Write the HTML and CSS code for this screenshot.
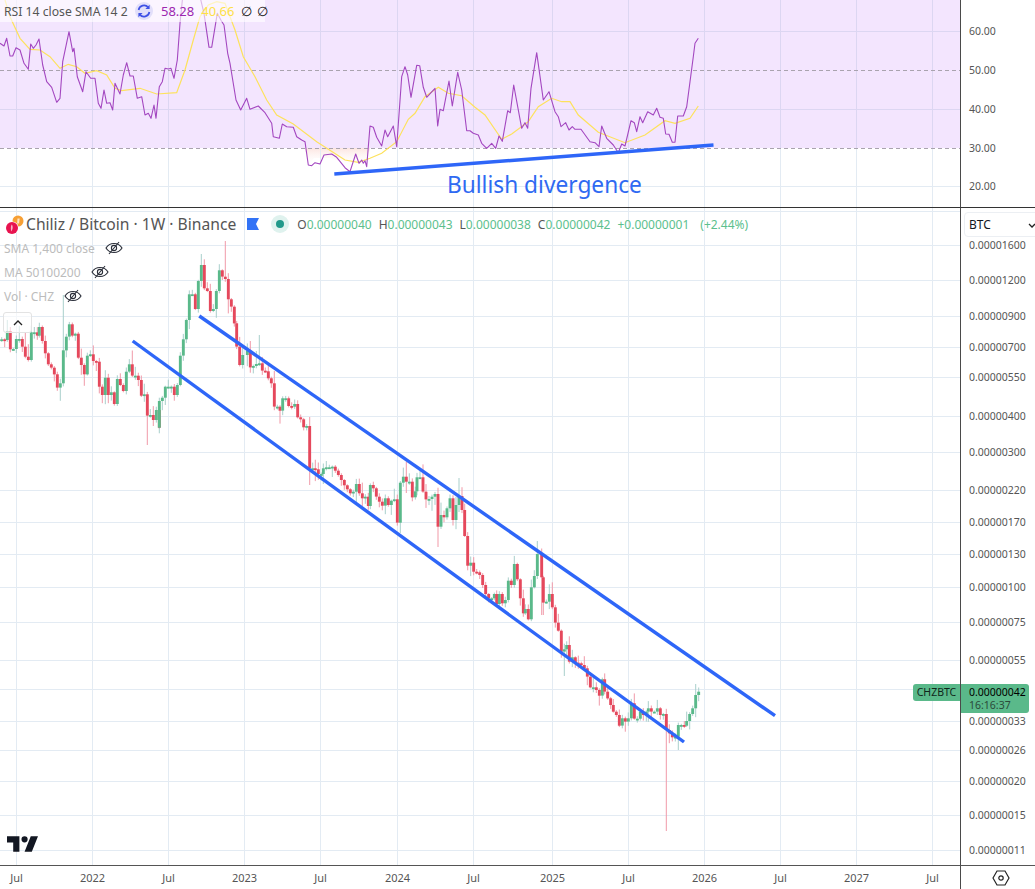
FILE: index.html
```html
<!DOCTYPE html>
<html lang="en">
<head>
<meta charset="utf-8">
<title>CHZBTC chart</title>
<link rel="stylesheet" href="styles.css">
</head>
<body>
<main class="chart">
  <section class="pane rsi-pane">
    <svg id="rsi" class="plot" width="960" height="207" viewBox="0 0 960 207"></svg>
    <div class="legend-rsi">
      <span class="rsi-name">RSI 14 close SMA 14 2</span>
      <svg class="reset" width="20" height="20" viewBox="0 0 20 20">
        <circle cx="10" cy="10" r="9" fill="#e2dffa"/>
        <path d="M4.6 9a5.5 5.5 0 0 1 9.6-2.6M15.4 11a5.5 5.5 0 0 1-9.6 2.6" fill="none" stroke="#3f51e6" stroke-width="1.7"/>
        <path d="M15.6 3.8v4.2h-4.2zM4.400 16.2v-4.2h4.2z" fill="#3f51e6"/>
      </svg>
      <span class="v-rsi">58.28</span>
      <span class="v-sma">40.66</span>
      <span class="v-na">∅</span>
      <span class="v-na">∅</span>
    </div>
    <div class="annotation">Bullish divergence</div>
  </section>
  <section class="axis rsi-axis"><svg id="rsiAxis" width="74" height="207" viewBox="961 0 74 207"></svg></section>

  <section class="pane price-pane">
    <svg id="price" class="plot" width="960" height="657" viewBox="0 208 960 657"></svg>
    <div class="legend-main">
      <div class="title-row">
        <svg class="logo" width="24" height="20" viewBox="0 0 24 20">
          <circle cx="16" cy="6" r="5.5" fill="#f7a035"/>
          <path d="M15.5 3.500h2.200l-.6 5h-2z" fill="#fff" opacity=".7"/>
          <circle cx="10" cy="13" r="6.600" fill="#fff"/>
          <circle cx="10" cy="13" r="6" fill="#e8134f"/>
          <path d="M9.600 9.500c1.600 1 1.600 5-.6 7 .2-2-.8-4 .6-7z" fill="#f6b3c6"/>
        </svg>
        <span class="title">Chiliz / Bitcoin · 1W · Binance</span>
        <svg class="flag" width="12" height="12" viewBox="0 0 12 12"><path d="M0 0h12L9 6l3 6H0z" fill="#3273f6"/></svg>
        <svg class="status" width="20" height="20" viewBox="0 0 20 20"><circle cx="10" cy="10" r="9" fill="#dff2ee"/><circle cx="10" cy="10" r="4" fill="#22998a"/></svg>
        <div class="ohlc">
          <span><b>O</b>0.00000040</span>
          <span><b>H</b>0.00000043</span>
          <span><b>L</b>0.00000038</span>
          <span><b>C</b>0.00000042</span>
          <span>+0.00000001</span>
          <span class="pct">(+2.44%)</span>
        </div>
      </div>
      <div class="ind-row"><span>SMA 1,400 close</span><svg class="eye" width="18" height="14" viewBox="0 0 18 14"><use href="#eyeoff"/></svg></div>
      <div class="ind-row"><span>MA 50100200</span><svg class="eye" width="18" height="14" viewBox="0 0 18 14"><use href="#eyeoff"/></svg></div>
      <div class="ind-row"><span>Vol · CHZ</span><svg class="eye" width="18" height="14" viewBox="0 0 18 14"><use href="#eyeoff"/></svg></div>
      <div class="collapse"><svg width="10" height="6" viewBox="0 0 10 6"><path d="M1 5l4-4 4 4" fill="none" stroke="#222" stroke-width="1.3"/></svg></div>
    </div>
    <svg class="tv-logo" width="31" height="16" viewBox="2 6 30 15"><path d="M14 6H2v6h6v9h6V6Zm12 15h-7l6-15h7l-6 15Zm-7-9a3 3 0 1 0 0-6 3 3 0 0 0 0 6Z" fill="#131722"/></svg>
    <div class="tag-left">CHZBTC</div>
  </section>
  <section class="axis price-axis">
    <div class="unit"><span>BTC</span><svg width="8" height="5" viewBox="0 0 8 5"><path d="M1 1l3 3 3-3" fill="none" stroke="#222" stroke-width="1.3"/></svg></div>
    <svg id="priceAxis" class="axis-svg" width="74" height="657" viewBox="961 208 74 657"></svg>
    <div class="tag-right"><strong>0.00000042</strong><span>16:16:37</span></div>
  </section>

  <section class="time-axis"><svg id="timeAxis" width="960" height="23" viewBox="0 866 960 23"></svg></section>
  <section class="corner">
    <svg width="18" height="16" viewBox="0 0 18 16"><path d="M1 8l4-7h8l4 7-4 7H5z" fill="none" stroke="#222" stroke-width="1.2"/><circle cx="9" cy="8" r="2.200" fill="none" stroke="#222" stroke-width="1.2"/></svg>
  </section>
</main>
<svg class="defs" width="0" height="0"><defs>
  <g id="eyeoff" fill="none" stroke="#2a2e39" stroke-width="1.1">
    <path d="M1 7c3.500-6 12.500-6 16 0-3.500 6-12.500 6-16 0z"/>
    <circle cx="9" cy="7" r="2.600"/>
    <path d="M4 13L14 1"/>
  </g>
</defs></svg>
<script src="chart.js"></script>
</body>
</html>
```
FILE: styles.css
```css
* { box-sizing: border-box; }
html, body { margin: 0; padding: 0; background: #fff; }
body { width: 1035px; height: 889px; overflow: hidden; font-family: "Noto Sans", "Open Sans", sans-serif; color: #555; }
.chart { display: grid; grid-template-columns: 961px 74px; grid-template-rows: 208px 658px 23px; width: 1035px; height: 889px; }
.pane { position: relative; overflow: hidden; border-right: 1px solid #4a4a4a; border-bottom: 1px solid #333; }
.price-pane { border-bottom-color: #555; }
.axis { position: relative; border-bottom: 1px solid #333; }
.price-axis { border-bottom-color: #555; }
.plot, .axis svg, .time-axis svg { display: block; }
.legend-rsi { position: absolute; left: 0; top: 0; width: 265px; height: 22px; padding-left: 4px; display: flex; align-items: center; background: rgba(255,255,255,.62); font-size: 13px; color: #555; white-space: nowrap; }
.rsi-name { flex: none; width: 130px; font-size: 12.200px; }
.reset { flex: none; }
.v-rsi { margin-left: 7px; color: #9c27b0; }
.v-sma { margin-left: 7px; color: #fde047; }
.v-na { margin-left: 7px; color: #111; }
.v-na + .v-na { margin-left: 5px; }
.annotation { position: absolute; left: 447px; top: 170px; font-size: 22.700px; line-height: 30px; color: #2f6af2; white-space: nowrap; }
.legend-main { position: absolute; left: 0; top: 0; }
.title-row { display: flex; align-items: center; height: 32px; margin-bottom: -4px; white-space: nowrap; }
.logo { margin-left: 2px; flex: none; position: relative; top: 1px; }
.title { font-size: 15.650px; color: #555; }
.flag { margin-left: 11px; flex: none; }
.status { margin-left: 11px; flex: none; }
.ohlc { display: flex; gap: 7px; margin-left: 7px; font-size: 12px; color: #5cbf8e; }
.ohlc b { font-weight: 400; color: #555; }
.pct { margin-left: 4px; }
.ind-row { display: flex; align-items: center; gap: 10px; height: 24px; padding-left: 4px; font-size: 12px; color: #bcbcbc; }
.ind-row svg { flex: none; }
.collapse { display: flex; align-items: center; justify-content: center; margin: 4px 0 0 3px; width: 29px; height: 21px; border: 1px solid #e3e3e3; border-radius: 3px; background: rgba(255,255,255,.6); }
.tv-logo { position: absolute; left: 7px; top: 628px; }
.tag-left { position: absolute; left: 913px; top: 476px; width: 47px; height: 17px; background: #5ab98a; border-radius: 3px 0 0 3px; font-size: 10.500px; line-height: 17px; text-align: center; color: #10261b; }
.unit { position: absolute; left: 3px; top: 4px; width: 75px; height: 25px; border: 1px solid #eceff3; border-radius: 4px; padding: 0 4px; display: flex; align-items: center; font-size: 12px; color: #131722; z-index: 2; background: #fff; }
.unit svg { position: absolute; left: 63px; top: 10px; }
.tag-right { position: absolute; left: 0; top: 476px; width: 68px; height: 29px; padding-left: 8px; background: #5ab98a; border-radius: 0 3px 3px 0; font-size: 10.500px; line-height: 13px; padding-top: 2px; color: #10261b; }
.tag-right strong { display: block; font-weight: 400; color: #000; }
.tag-right span { display: block; color: #2b4a3a; }
.time-axis { border-right: 1px solid #4a4a4a; }
.corner { display: flex; align-items: center; justify-content: center; padding-left: 6px; }
.defs { position: absolute; }
.ax { font-size: 10.500px; fill: #555; }
.tx { font-size: 11px; fill: #555; text-anchor: middle; }
```
FILE: chart.js
```js
(function () {
  var NS = 'http://www.w3.org/2000/svg';
  function el(parent, name, attrs, text) {
    var e = document.createElementNS(NS, name);
    for (var k in attrs) e.setAttribute(k, attrs[k]);
    if (text) e.textContent = text;
    parent.appendChild(e);
    return e;
  }
  function parse(s, ox, oy) {
    return s.trim().split(/\s+/).map(function (p) {
      var a = p.split(',');
      return [ox + a[0] / 3, oy + a[1] / 3];
    });
  }
  function pts(a) { return a.map(function (p) { return p[0].toFixed(1) + ',' + p[1].toFixed(1); }).join(' '); }

  var VX = [16, 92, 168, 244, 320, 397, 473, 552, 628, 704, 780, 856, 932];
  var VL = ['Jul', '2022', 'Jul', '2023', 'Jul', '2024', 'Jul', '2025', 'Jul', '2026', 'Jul', '2027', 'Jul'];

  /* ---------- RSI pane ---------- */
  var r = document.getElementById('rsi');
  var defs = el(r, 'defs', {});
  var grad = el(defs, 'linearGradient', { id: 'under', x1: 0, y1: 0, x2: 0, y2: 1 });
  el(grad, 'stop', { offset: 0, 'stop-color': '#fbdcd6', 'stop-opacity': .75 });
  el(grad, 'stop', { offset: 1, 'stop-color': '#fff', 'stop-opacity': 0 });
  el(r, 'rect', { x: 0, y: 0, width: 960, height: 148, fill: '#f3e5fe' });
  el(r, 'path', { d: 'M305 148H370L366 165H350L330 158H314L308 166Z', fill: 'url(#under)' });
  [[31, '#dcd6f2'], [109, '#dcd6f2'], [186, '#e3ebf3']].forEach(function (h) {
    el(r, 'rect', { x: 0, y: h[0], width: 960, height: 1, fill: h[1] });
  });
  VX.forEach(function (x) {
    el(r, 'rect', { x: x, y: 0, width: 1, height: 148, fill: '#dcd6f2' });
    el(r, 'rect', { x: x, y: 148, width: 1, height: 59, fill: '#e3ebf3' });
  });
  [70.5, 148.5].forEach(function (y) {
    el(r, 'line', { x1: 0, x2: 960, y1: y, y2: y, stroke: '#a9a3ae', 'stroke-dasharray': '4 3' });
  });

  var rsi = parse('0,130 12,138 20,115 30,168 38,168 48,143 60,150 72,190 85,208 92,132 100,145 108,135 117,117 128,195 140,245 155,262 170,307 180,295 188,185 207,95 218,155 222,145 232,230 248,275 258,215 272,235 285,235 295,310 303,325 312,270 320,310 330,308 338,330 345,250 360,282 370,225 380,188 390,228 400,228 412,295 425,290 435,345 445,340 453,355 462,315 468,355 478,260 487,245 495,205 505,207 513,205 522,235 532,180 540,70 548,-10 600,-10 612,40 627,142 635,142 652,40 664,62 672,75 683,160 690,190 708,300 722,330 740,295 750,328 775,318 795,338 815,370 820,410 838,415 847,372 860,380 880,382 890,410 905,420 915,425 925,495 935,497 945,488 960,492 972,465 995,462 1010,472 1035,503', 0, 0)
    .concat(parse('15,515 32,462 42,490 50,480 55,490 60,482 65,500 75,378 85,382 95,412 110,438 120,390 128,410 145,378 155,440 170,230 180,200 188,225 198,292 215,196 224,197 235,262 245,292 270,265 278,378 285,328 295,332 312,243 322,318 338,217 350,270 365,392 375,392 385,400 400,405 410,430 425,445 440,430 452,445 462,408 472,424 488,332 496,338 506,255 530,385 540,368 548,385 558,265 575,158 595,300 612,275 630,335 640,350 648,380 662,368 672,390 682,380 690,388 708,388 735,425 750,428 762,440 770,378 785,415 805,435 820,458 830,432 840,438 858,362 868,368 875,395 885,350 893,368 908,335 925,345 935,325 945,352 955,355 962,402 972,403 982,427 990,427 998,348 1015,348 1025,320 1035,245', 345, 0))
    .concat(parse('10,170 15,130 25,115', 690, 0));
  var sma = parse('15,0 30,50 60,115 90,148 120,150 150,170 180,205 205,193 230,200 255,220 290,212 320,225 345,265 365,272 420,265 470,282 530,278 555,210 580,120 600,50 625,15 650,5 675,10 705,90 730,170 765,230 800,300 830,345 880,372 950,425 1035,480', 0, 0)
    .concat(parse('40,487 75,475 110,460 155,425 190,358 210,340 240,290 280,262 310,280 350,287 390,322 420,345 470,418 500,402 550,365 580,320 620,295 650,305 675,305 700,345 760,397 840,428 900,405 960,362 990,370 1035,355', 345, 0))
    .concat(parse('25,318', 690, 0));
  el(r, 'polyline', { points: pts(sma), fill: 'none', stroke: '#fde25c', 'stroke-width': 1.2 });
  el(r, 'polyline', { points: pts(rsi), fill: 'none', stroke: '#a347c0', 'stroke-width': 1.1, 'stroke-linejoin': 'round' });
  el(r, 'line', { x1: 334.3, y1: 174, x2: 713.5, y2: 145, stroke: '#2e66f8', 'stroke-width': 3.4 });

  var ra = document.getElementById('rsiAxis');
  [[60, 35], [50, 74], [40, 113], [30, 152], [20, 190]].forEach(function (a) {
    el(ra, 'text', { x: 969, y: a[1], class: 'ax' }, a[0].toFixed(2));
  });

  /* ---------- Price pane ---------- */
  var p = document.getElementById('price');
  var H = [[211], [245, '1600'], [280, '1200'], [316, '0900'], [347, '0700'], [377, '0550'], [416, '0400'], [452, '0300'], [490, '0220'], [522, '0170'], [554, '0130'], [587, '0100'], [622, '0075'], [660, '0055'], [689], [721, '0033'], [750, '0026'], [781, '0020'], [815, '0015'], [850, '0011']];
  H.forEach(function (h) { el(p, 'rect', { x: 0, y: h[0], width: 960, height: 1, fill: '#e3ebf3' }); });
  VX.forEach(function (x) { el(p, 'rect', { x: x, y: 208, width: 1, height: 657, fill: '#e3ebf3' }); });

  var seq = parse('5,403 14,405 22,378 31,433 40,432 49,402 58,402 67,425 76,455 85,465 94,382 103,382 112,392 118,366 127,408 136,445 145,478 154,488 163,508 172,548 181,535 190,436 199,395 208,358 217,392 226,386 235,458 244,480 253,508 262,452 271,448 280,468 289,470 298,545 307,570 316,518 325,570 334,562 343,597 352,522 361,540 370,558 379,500 388,478 397,512 406,512 415,525 424,572 433,568 442,632 451,630 460,645 469,615 478,668 478,588 487,578 496,545 505,545 514,545 523,570 532,540 541,452 550,403 559,345 568,268 577,268 586,312 595,228 604,180 613,250 622,258 631,318 640,312 649,258 658,196 667,215 676,222 685,283 694,305 703,355', 0, 205)
    .concat(parse('20,50 29,105 38,75 52,62 61,112 70,108 79,102 88,100 97,122 106,124 115,145 124,160 133,230 142,230 150,242 158,205 167,205 176,228 185,230 194,222 203,262 212,268 221,292 230,288 239,415 248,415 256,418 265,432 274,432 280,415 289,412 298,412 307,410 316,422 325,435 334,450 343,466 352,478 361,490 370,485 379,462 388,490 397,505 406,500 415,528 421,465 430,475 439,500 448,515 457,527 466,505 475,525 484,512 493,508 502,578 511,458 520,440 529,455 538,455 547,502 556,484 561,442 570,442 579,485 588,508 597,507 606,500 615,492 624,590 633,555 642,562 651,535 660,505 669,570 678,525 687,498 696,540', 230, 330))
    .concat(parse('14,18 23,107 32,98 41,125 50,127 59,135 68,165 77,192 86,205 95,205 103,192 110,222 118,192 127,220 136,210 145,152 154,165 163,102 172,148 181,205 190,250 196,237 205,268 214,172 223,138 232,72', 460, 530))
    .concat(parse('5,52 10,128 19,125 28,102 37,142 46,188 55,212 64,275 73,268 80,255 88,305 97,292 106,308 115,310 124,315 133,325 142,350 151,382 160,382 169,390 178,407 187,358 194,395 203,415 212,435 220,455 229,465 238,497 247,475 256,485 265,475 274,430 283,476 292,476 301,455 310,465 319,455 325,445 334,455 343,455 352,445 361,465 370,462 379,510 388,520 397,532 406,530 415,495 424,495 433,497 440,483 449,462 458,445 467,405 476,395', 540, 560));

  var special = [[224, 241, 0], [201, 254, 0], [146, 445, 1], [666.3, 831, 1], [64, 295, 0], [538, 541, 0], [458.3, 478, 0], [438, 547, 1], [309, 485, 1], [405.7, 462, 0], [399, 533, 1], [563.3, 676, 1], [543, 615, 1], [695, 684, 0], [678, 750, 1], [259, 335, 0], [249, 341, 0]];
  var seed = 12345;
  function rnd() { seed = (seed * 16807) % 2147483647; return seed / 2147483647; }

  var prev = seq[0][1] + 1;
  var wicks = el(p, 'g', {}), bodies = el(p, 'g', {});
  seq.forEach(function (c) {
    var x = c[0], close = c[1], open = prev;
    var up = close <= open;
    var top = Math.min(open, close), bot = Math.max(open, close);
    var wt = top - 1 - rnd() * rnd() * 14, wb = bot + 1 + rnd() * rnd() * 14;
    special.forEach(function (s) {
      if (Math.abs(s[0] - x) < 1.5) { if (s[2]) wb = s[1]; else wt = s[1]; }
    });
    el(wicks, 'rect', { x: (x - .5).toFixed(1), y: wt.toFixed(1), width: 1, height: (wb - wt).toFixed(1), fill: up ? '#a9cfcb' : '#f19aa8' });
    el(bodies, 'rect', { x: (x - 1.45).toFixed(2), y: top.toFixed(1), width: 2.9, height: Math.max(bot - top, 1.8).toFixed(1), fill: up ? '#5ab98a' : '#e5485c' });
    prev = close;
  });
  [[132.7, 341, 684, 742], [199.3, 316, 775, 715.7]].forEach(function (l) {
    el(p, 'line', { x1: l[0], y1: l[1], x2: l[2], y2: l[3], stroke: '#2e66f8', 'stroke-width': 3.4 });
  });

  var pa = document.getElementById('priceAxis');
  H.forEach(function (h) {
    if (h[1]) el(pa, 'text', { x: 969, y: h[0] + 4, class: 'ax' }, '0.0000' + h[1]);
  });

  /* ---------- Time axis ---------- */
  var t = document.getElementById('timeAxis');
  VX.forEach(function (x, i) {
    el(t, 'text', { x: x + .5, y: 882, class: 'tx' }, VL[i]);
  });
})();
```
